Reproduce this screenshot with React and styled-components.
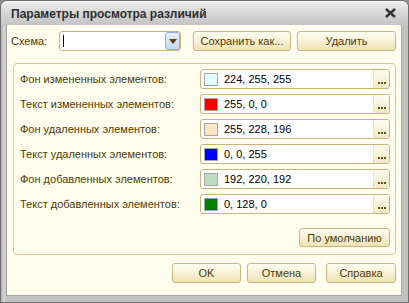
import React from "react";
import styled, { createGlobalStyle } from "styled-components";

const Global = createGlobalStyle`
  html, body { margin: 0; padding: 0; background: #8c8c8c; }
  body { font-family: "Liberation Sans", Arial, sans-serif; }
`;

const Window = styled.div`
  width: 409px;
  height: 303px;
  box-sizing: border-box;
  display: flex;
  flex-direction: column;
  border: 1px solid #6e6e6e;
  border-radius: 7px 7px 0 0;
  background: linear-gradient(to right, #b4b4b4, #d4d4d4 3px, #c2c2c2 6px);
  overflow: hidden;
`;

const TitleBar = styled.div`
  height: 24px;
  flex: none;
  display: flex;
  align-items: center;
  justify-content: space-between;
  padding: 0 12px 0 10px;
  background: linear-gradient(to bottom, #f0f0f0 0%, #d8d8d8 45%, #c4c4c4 100%);
`;

const Title = styled.div`
  font-size: 12px;
  font-weight: bold;
  color: #2f2f2f;
  padding-top: 1px;
`;

const Content = styled.div`
  flex: 1;
  margin: 0 6px 6px 5px;
  background: #fffdee;
  border: 1px solid #a8a8a8;
  border-top: none;
  display: flex;
  flex-direction: column;
  padding: 6px 5px 0 4px;
  color: #4d3b00;
  font-size: 11px;
`;

const SchemeRow = styled.div`
  display: flex;
  align-items: center;
  height: 20px;
`;

const Label = styled.span`
  font-size: 11px;
  color: #4d3b00;
  white-space: nowrap;
`;

const SchemeLabel = styled(Label)`
  width: 48px;
`;

const Combo = styled.div`
  width: 122px;
  height: 20px;
  box-sizing: border-box;
  border: 1px solid #c8b479;
  border-radius: 3px;
  background: #fff;
  display: flex;
  align-items: center;
  justify-content: space-between;
  padding: 0 0 0 3px;
`;

const Caret = styled.span`
  width: 1px;
  height: 12px;
  background: #000;
`;

const DropButton = styled.div`
  width: 15px;
  height: 18px;
  box-sizing: border-box;
  border: 1px solid #8eaedc;
  border-radius: 3px;
  background: linear-gradient(to bottom, #e6effc, #c2d8f6);
  display: flex;
  align-items: center;
  justify-content: center;
`;

const Button = styled.div`
  width: ${(p) => p.$w}px;
  height: ${(p) => p.$h || 20}px;
  margin-left: ${(p) => p.$ml || 0}px;
  box-sizing: border-box;
  border: 1px solid #c9b67e;
  border-radius: 3px;
  background: linear-gradient(to bottom, #fffdf2, #f7eed0 60%, #efe2b6);
  display: flex;
  align-items: center;
  justify-content: center;
  font-size: 11px;
  color: #4d3b00;
  white-space: nowrap;
`;

const TopButtons = styled.div`
  display: flex;
  gap: 6px;
  margin-left: 12px;
`;

const Group = styled.div`
  margin: 12px 0 0 2px;
  border: 1px solid #d8c995;
  border-radius: 4px;
  padding: 5px 5px 7px 6px;
  display: flex;
  flex-direction: column;
`;

const Rows = styled.div`
  display: grid;
  grid-template-columns: 180px 1fr;
  row-gap: 5px;
  align-items: center;
`;

const Field = styled.div`
  height: 20px;
  box-sizing: border-box;
  border: 1px solid #c8b479;
  border-radius: 3px;
  background: #fff;
  display: flex;
  align-items: center;
  overflow: hidden;
`;

const Swatch = styled.span`
  width: 14px;
  height: 13px;
  box-sizing: border-box;
  border: 1px solid #a4a4a4;
  margin: 0 6px 0 3px;
  flex: none;
`;

const Value = styled.span`
  flex: 1;
  font-size: 11px;
  color: #000;
  white-space: nowrap;
`;

const Ellipsis = styled.span`
  width: 16px;
  align-self: stretch;
  background: linear-gradient(to bottom, #fffcf0, #f2e8c6);
  border-left: 1px solid #ece2c0;
  display: flex;
  align-items: flex-end;
  justify-content: center;
  padding-bottom: 4px;
  box-sizing: border-box;
  gap: 1px;
`;

const Dot = styled.i`
  width: 2px;
  height: 2px;
  background: #6b5400;
`;

const GroupFooter = styled.div`
  display: flex;
  justify-content: flex-end;
  margin-top: 14px;
`;

const Footer = styled.div`
  display: flex;
  justify-content: flex-end;
  margin-top: 8px;
  gap: 6px;
`;

const rows = [
  ["Фон измененных элементов:", [224, 255, 255]],
  ["Текст измененных элементов:", [255, 0, 0]],
  ["Фон удаленных элементов:", [255, 228, 196]],
  ["Текст удаленных элементов:", [0, 0, 255]],
  ["Фон добавленных элементов:", [192, 220, 192]],
  ["Текст добавленных элементов:", [0, 128, 0]],
];

export default function App() {
  return (
    <>
      <Global />
      <Window>
        <TitleBar>
          <Title>Параметры просмотра различий</Title>
          <svg width="11" height="10" viewBox="0 0 11 10">
            <path d="M1 1 L10 9 M10 1 L1 9" stroke="#333" strokeWidth="2.4" />
          </svg>
        </TitleBar>
        <Content>
          <SchemeRow>
            <SchemeLabel>Схема:</SchemeLabel>
            <Combo>
              <Caret />
              <DropButton>
                <svg width="8" height="5" viewBox="0 0 8 5">
                  <path d="M0 0 H8 L4 5 Z" fill="#5a4300" />
                </svg>
              </DropButton>
            </Combo>
            <TopButtons>
              <Button $w={98}>Сохранить как...</Button>
              <Button $w={99}>Удалить</Button>
            </TopButtons>
          </SchemeRow>
          <Group>
            <Rows>
              {rows.map(([label, rgb]) => (
                <React.Fragment key={label}>
                  <Label>{label}</Label>
                  <Field>
                    <Swatch style={{ background: `rgb(${rgb.join(",")})` }} />
                    <Value>{rgb.join(", ")}</Value>
                    <Ellipsis>
                      <Dot />
                      <Dot />
                      <Dot />
                    </Ellipsis>
                  </Field>
                </React.Fragment>
              ))}
            </Rows>
            <GroupFooter>
              <Button $w={91} $h={19}>По умолчанию</Button>
            </GroupFooter>
          </Group>
          <Footer>
            <Button $w={69}>OK</Button>
            <Button $w={69}>Отмена</Button>
            <Button $w={70} $ml={4}>Справка</Button>
          </Footer>
        </Content>
      </Window>
    </>
  );
}
